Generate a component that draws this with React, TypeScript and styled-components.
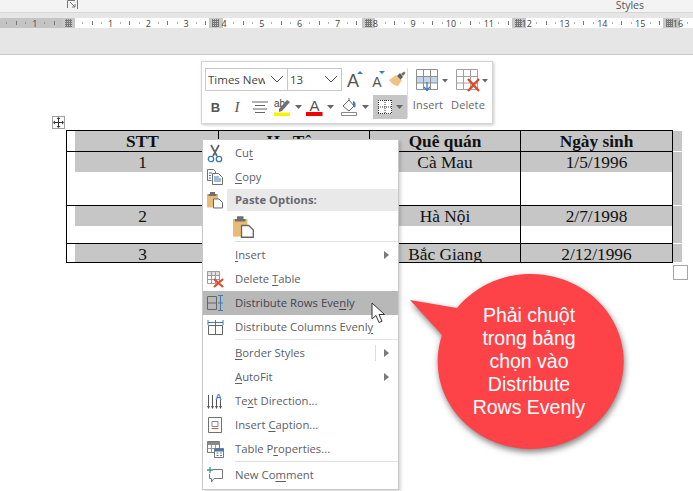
import React from 'react'
import styled, { createGlobalStyle } from 'styled-components'

const GlobalStyle = createGlobalStyle`
    html, body {
        margin: 0;
        padding: 0;
        background: #ffffff;
    }
`

const UI_FONT = `"Open Sans", "Noto Sans", sans-serif`

const Page = styled.div`
    position: relative;
    width: 693px;
    height: 491px;
    overflow: hidden;
    background: #ffffff;
    font-family: ${UI_FONT};
`

const RibbonEdge = styled.div`
    height: 12px;
    display: flex;
    align-items: flex-start;
    padding: 0 49px 0 67px;
    background: #f3f3f3;
    border-bottom: 1px solid #d6d6d6;
`

const Launcher = styled.svg`
    width: 12px;
    height: 9px;
    flex: none;
`

const StylesLabel = styled.span`
    margin-left: auto;
    font-size: 10.5px;
    line-height: 11px;
    color: #555555;
`

const RulerBand = styled.div`
    height: 42px;
    box-sizing: border-box;
    padding-top: 5px;
    background: #e6e6e6;
    border-bottom: 1px solid #c9c9c9;
`

const RulerSvg = styled.svg`
    display: block;
    width: 693px;
    height: 10px;
    font-family: ${UI_FONT};
`

const TableWrap = styled.div`
    position: relative;
    width: 616px;
    margin: 75px 0 0 66px;
`

const Grid = styled.div`
    display: grid;
    grid-template-columns: 153px 151px 151px 152px 9px;
    grid-template-rows: 22px 54px 38px 19px;
    font-family: "Liberation Serif", "Times New Roman", serif;
    font-size: 17.33px;
    color: #111111;
`

const Cell = styled.div<{ $first?: boolean; $top?: boolean; $bar: string }>`
    box-sizing: border-box;
    overflow: hidden;
    text-align: center;
    line-height: 21px;
    border-right: 1px solid #000000;
    border-bottom: 1px solid #000000;
    border-left: ${(p) => (p.$first ? '1px solid #000000' : 'none')};
    border-top: ${(p) => (p.$top ? '1px solid #000000' : 'none')};
    background: linear-gradient(#c6c6c6, #c6c6c6) no-repeat right top;
    background-size: ${(p) => (p.$first ? 'calc(100% - 8px)' : '100%')} ${(p) => p.$bar};
`

const HeadCell = styled(Cell)`
    font-weight: bold;
`

const Gutter = styled.div<{ $top?: boolean }>`
    margin-bottom: 1px;
    margin-top: ${(p) => (p.$top ? '1px' : '0')};
    background: #c6c6c6;
`

const MoveHandle = styled.div`
    position: absolute;
    left: -14px;
    top: -14px;
    width: 13px;
    height: 13px;
    box-sizing: border-box;
    border: 1px solid #a0a0a0;
    display: flex;
    align-items: center;
    justify-content: center;
    background: #ffffff;
`

const ResizeHandle = styled.div`
    position: absolute;
    left: 607px;
    top: 135px;
    width: 15px;
    height: 15px;
    box-sizing: border-box;
    border: 1px solid #a6a6a6;
    background: #ffffff;
`

const MiniToolbar = styled.div`
    position: absolute;
    left: 201px;
    top: 61px;
    width: 292px;
    height: 63px;
    box-sizing: border-box;
    display: flex;
    padding: 5px 4px 4px 3px;
    background: #ffffff;
    border: 1px solid #d4d4d4;
    box-shadow: 1px 1px 3px rgba(0, 0, 0, 0.22);
    color: #555555;
`

const ToolColumn = styled.div`
    width: 202px;
    display: flex;
    flex-direction: column;
    gap: 4px;
`

const ToolRow = styled.div`
    display: flex;
    align-items: center;
`

const Combo = styled.div<{ $w: number }>`
    width: ${(p) => p.$w}px;
    height: 23px;
    box-sizing: border-box;
    margin-right: -1px;
    border: 1px solid #c8c8c8;
    display: flex;
    align-items: center;
    padding: 0 3px 0 2px;
    font-size: 11.5px;
    color: #444444;
    white-space: nowrap;
    overflow: hidden;
`

const ComboText = styled.span`
    flex: 1;
    overflow: hidden;
    margin-right: 5px;
`

const ToolBtn = styled.div<{ $w: number; $active?: boolean }>`
    width: ${(p) => p.$w}px;
    height: 24px;
    flex: none;
    display: flex;
    align-items: center;
    justify-content: center;
    gap: 4px;
    background: ${(p) => (p.$active ? '#c6c6c6' : 'transparent')};
`

const BoldGlyph = styled.span`
    font-family: "Liberation Sans", Arial, sans-serif;
    font-size: 13px;
    font-weight: bold;
    color: #555555;
`

const ItalicGlyph = styled.span`
    font-family: "Liberation Serif", serif;
    font-size: 15px;
    font-style: italic;
    color: #555555;
`

const ToolDivider = styled.div`
    width: 1px;
    height: 50px;
    margin-top: 1px;
    background: #dedede;
`

const BigBtn = styled.div`
    width: 40px;
    display: flex;
    flex-direction: column;
    align-items: flex-end;
    padding-top: 2px;
`

const BigLabel = styled.span`
    align-self: center;
    margin-top: 5px;
    font-size: 11px;
    line-height: 16px;
    letter-spacing: 0.1px;
    color: #666666;
`

const Menu = styled.div`
    position: absolute;
    left: 202px;
    top: 139px;
    width: 197px;
    height: 351px;
    box-sizing: border-box;
    padding: 1px 0;
    background: #ffffff;
    border: 1px solid #c9c9c9;
    box-shadow: 2px 2px 3px rgba(0, 0, 0, 0.16);
    font-size: 11.3px;
    color: #5e5e68;
`

const Item = styled.div<{ $hot?: boolean }>`
    height: 24px;
    display: flex;
    align-items: center;
    background: ${(p) => (p.$hot ? '#b8b8b8' : 'transparent')};
    color: ${(p) => (p.$hot ? '#44444e' : 'inherit')};
`

const IconSlot = styled.div`
    width: 32px;
    flex: none;
    display: flex;
    justify-content: center;
    padding-right: 8px;
    box-sizing: border-box;
`

const ItemText = styled.span`
    flex: 1;
    padding-bottom: 2px;
    white-space: nowrap;
`

const Key = styled.span`
    text-decoration: underline;
    text-underline-offset: 2px;
`

const SubArrow = styled.i`
    width: 0;
    height: 0;
    margin-right: 9px;
    border-left: 5px solid #7a7a7a;
    border-top: 4px solid transparent;
    border-bottom: 4px solid transparent;
`

const SplitLine = styled.i`
    width: 1px;
    height: 16px;
    margin-right: 8px;
    background: #dcdcdc;
`

const PasteLine = styled.div`
    height: 22px;
    display: flex;
    align-items: center;
`

const PasteHead = styled.div`
    flex: 1;
    align-self: stretch;
    display: flex;
    align-items: center;
    margin-left: -8px;
    padding: 0 0 2px 8px;
    background: #e9e9e9;
    font-weight: 700;
    color: #6a6a72;
`

const PasteRow = styled.div`
    height: 30px;
    padding: 4px 0 0 30px;
    box-sizing: border-box;
`

const Separator = styled.div`
    height: 1px;
    margin: 0 0 1px 32px;
    background: #e2e2e2;
`

const Callout = styled.div`
    position: absolute;
    left: 405px;
    top: 270px;
    width: 240px;
    height: 190px;
`

const CalloutShape = styled.svg`
    display: block;
    width: 240px;
    height: 190px;
    overflow: visible;
    filter: drop-shadow(1px 3px 3px rgba(0, 0, 0, 0.5));
`

const CalloutText = styled.div`
    position: absolute;
    left: 44px;
    top: 34px;
    width: 160px;
    text-align: center;
    font-family: "Liberation Sans", Arial, sans-serif;
    font-size: 19.5px;
    line-height: 23px;
    color: #ffffff;
`

const Pointer = styled.svg`
    position: absolute;
    left: 371px;
    top: 302px;
    width: 16px;
    height: 22px;
`

const Caret = () => (
    <svg width="7" height="4" viewBox="0 0 7 4">
        <path d="M0 0h7L3.5 4z" fill="#666666" />
    </svg>
)

const Chevron = () => (
    <svg width="14" height="8" viewBox="0 0 14 8">
        <path d="M1 1l6 6 6-6" fill="none" stroke="#555555" />
    </svg>
)

const Ruler = () => {
    const step = 37.83
    const zero = 72.7
    const numbers: [number, number][] = []
    for (let n = 1; n <= 16; n++) numbers.push([n, zero + n * step])
    numbers.push([1, zero - step])
    const ticks: number[] = []
    for (let q = -8; q < 70; q++) {
        if (q % 4 !== 0) ticks.push(q)
    }
    const markers = [
        [62, 13],
        [209, 14],
        [362, 13],
        [512, 14],
        [663, 17],
    ]
    return (
        <RulerSvg viewBox="0 0 693 10">
            <defs>
                <pattern id="hatch" width="2" height="2" patternUnits="userSpaceOnUse">
                    <rect width="1" height="2" fill="#777777" />
                    <rect width="2" height="1" fill="#777777" />
                </pattern>
            </defs>
            <rect width="693" height="10" fill="#ffffff" />
            <rect width="75" height="10" fill="#c4c4c4" />
            {ticks.map((q) => {
                const x = Math.round(zero + (q * step) / 4)
                return q % 2 === 0 ? (
                    <rect key={q} x={x} y="3" width="1" height="4" fill="#777777" />
                ) : (
                    <rect key={q} x={x} y="4.5" width="1" height="1" fill="#666666" />
                )
            })}
            {markers.map(([x, w]) => (
                <g key={x}>
                    <rect x={x} width={w} height="10" fill="#c8c8c8" />
                    <rect x={x + 3} y="1" width="7" height="8" fill="url(#hatch)" />
                </g>
            ))}
            {numbers.map(([n, x]) => (
                <text key={`${n}-${x}`} x={x} y="8.5" fontSize="9" textAnchor="middle" fill="#444444">
                    {n}
                </text>
            ))}
        </RulerSvg>
    )
}

const CutIcon = () => (
    <svg width="16" height="19" viewBox="0 0 16 19">
        <path d="M4 1l6 11M12 1L6 12" stroke="#5f6468" strokeWidth="1.7" fill="none" />
        <circle cx="4" cy="15" r="2.7" fill="none" stroke="#3e7ab8" strokeWidth="1.3" />
        <circle cx="12" cy="15" r="2.7" fill="none" stroke="#3e7ab8" strokeWidth="1.3" />
    </svg>
)

const CopyIcon = () => (
    <svg width="16" height="16" viewBox="0 0 16 16">
        <path d="M.5.5h6l2 2V4M.5.5v11h4" fill="#ffffff" stroke="#707070" />
        <path d="M2 4h3M2 6.5h2M2 9h2" stroke="#3e7ab8" />
        <path d="M5.5 4.5h6l4 4v7h-10z" fill="#ffffff" stroke="#707070" />
        <path d="M7 8h5M7 10h7M7 12h7" stroke="#3e7ab8" />
    </svg>
)

const PasteIcon = ({ size = 16 }: { size?: number }) => (
    <svg width={size} height={size * 1.08} viewBox="0 0 16 17.3">
        <path d="M0 3h11v13.500H0z" fill="#e9bb78" />
        <path d="M3 3V1h5v2h1.500v2h-8V3z" fill="#6f6f6f" />
        <path d="M6.500 8h5.500l3.500 3.500v5.500h-9z" fill="#ffffff" stroke="#666666" />
    </svg>
)

const DeleteTableIcon = () => (
    <svg width="17" height="17" viewBox="0 0 17 17">
        <path d="M.5.5h12v4H.5z" fill="#c9c9c9" opacity="0.6" />
        <path d="M.5.5h12v12H.5zM.5 4.500h12M.5 8.500h12M4.500.5v12M8.500.5v12" fill="none" stroke="#9b9b9b" />
        <path d="M7 8l9 8M16 8l-9 8" stroke="#e24b2c" strokeWidth="2.200" />
    </svg>
)

const RowsEvenIcon = () => (
    <svg width="17" height="16" viewBox="0 0 17 16">
        <path d="M.5 1.500h9v13h-9zM.5 8h9" fill="none" stroke="#666666" />
        <path d="M13.500 1v14M11 .5h5M11 8h5M11 15.500h5" fill="none" stroke="#3e7ab8" />
    </svg>
)

const ColumnsEvenIcon = () => (
    <svg width="17" height="16" viewBox="0 0 17 16">
        <path d="M1.500 6.500h14v9h-14zM8.500 6.500v9" fill="none" stroke="#666666" />
        <path d="M1 3.500h15M1 1v5M8.500 1v5M16 1v5" fill="none" stroke="#3e7ab8" />
    </svg>
)

const TextDirectionIcon = () => (
    <svg width="16" height="17" viewBox="0 0 16 17">
        <path d="M1.500 2v12M5.500 2v12M9.500 7v7M13.500 7v7" stroke="#555555" />
        <path d="M0 13l1.500 3L3 13zM4 13l1.500 3L7 13zM8 13l1.500 3 1.500-3zM12 13l1.500 3 1.500-3z" fill="#555555" />
        <text x="11.500" y="7" fontSize="9" fontWeight="700" textAnchor="middle" fill="#3e7ab8" fontFamily="Liberation Sans">
            A
        </text>
    </svg>
)

const CaptionIcon = () => (
    <svg width="15" height="16" viewBox="0 0 15 16">
        <path d="M.5.5h13v15H.5z" fill="none" stroke="#707070" />
        <path d="M4 4.500h6v5H4z" fill="none" stroke="#888888" />
        <path d="M3.500 11.500h7" stroke="#d9573a" />
    </svg>
)

const TablePropsIcon = () => (
    <svg width="17" height="17" viewBox="0 0 17 17">
        <path d="M.5.500h12v11H.5z" fill="#ffffff" stroke="#777777" />
        <path d="M.5 1h12v3H.5z" fill="#8a8a8a" />
        <path d="M.5 7.500h12M4.500 4v7.500M8.500 4v7.500" stroke="#999999" />
        <path d="M7.500 7.500h9v9h-9z" fill="#ffffff" stroke="#777777" />
        <path d="M7.500 8h9v2.500h-9z" fill="#3e7ab8" />
        <path d="M9.500 12h2M13 12h2M9.500 14.500h2M13 14.500h2" stroke="#777777" />
    </svg>
)

const CommentIcon = () => (
    <svg width="16" height="17" viewBox="0 0 16 17">
        <path d="M6 2.500h9.500v9H7L4.500 15v-3.500H2.500V7" fill="none" stroke="#777777" />
        <path d="M3 0v6M0 3h6" stroke="#3a9a8a" strokeWidth="1.300" />
    </svg>
)

const GrowIcon = ({ shrink }: { shrink?: boolean }) => (
    <svg width="17" height="20" viewBox="0 0 17 20">
        <text
            x="7"
            y="18"
            fontSize={shrink ? 14 : 18}
            textAnchor="middle"
            fill="#555555"
            fontFamily="Liberation Sans"
        >
            A
        </text>
        {shrink ? (
            <path d="M9 2h6l-3 3z" fill="#3e7ab8" />
        ) : (
            <path d="M11 5h6l-3-3z" fill="#3e7ab8" />
        )}
    </svg>
)

const PainterIcon = () => (
    <svg width="17" height="17" viewBox="0 0 17 17">
        <path d="M7 4l6 5-4 6C6 15 2 12 0 9z" fill="#efc386" />
        <path d="M8 5l3-3 3 4-2.500 2.500z" fill="#5f5f5f" />
        <path d="M12 3l3-2.500L16.500 2 14 5z" fill="#6f6f6f" />
    </svg>
)

const AlignIcon = () => (
    <svg width="16" height="13" viewBox="0 0 16 13">
        <path d="M0 1h16M3 4.500h10M1 8h14M3 11.500h10" stroke="#666666" />
    </svg>
)

const HighlightIcon = () => (
    <svg width="17" height="18" viewBox="0 0 17 18">
        <text x="0" y="9" fontSize="10" fill="#444444" fontFamily="Liberation Sans">
            ab
        </text>
        <path d="M5 11l8-9 3 2-8 9-3 1z" fill="#6f6f6f" />
        <path d="M0 14.500h16V18H0z" fill="#f7f300" />
    </svg>
)

const FontColorIcon = () => (
    <svg width="17" height="18" viewBox="0 0 17 18">
        <text x="8.500" y="13" fontSize="15" textAnchor="middle" fill="#555555" fontFamily="Liberation Sans">
            A
        </text>
        <path d="M0 14h16.500v4H0z" fill="#f00000" />
    </svg>
)

const ShadingIcon = () => (
    <svg width="17" height="18" viewBox="0 0 17 18">
        <path d="M2 8l6-6 5 6-5 5z" fill="#ffffff" stroke="#666666" />
        <path d="M8 2V0" stroke="#666666" />
        <path d="M12 3c3 1 3 4 2 7l-2-3z" fill="#3e7ab8" />
        <path d="M.5 14.500h15v3H.5z" fill="#ffffff" stroke="#8a8a8a" />
    </svg>
)

const BordersIcon = () => (
    <svg width="14" height="14" viewBox="0 0 14 14">
        <path d="M0 0h14v14H0z" fill="#ffffff" />
        <path
            d="M.5 0v14M13.500 0v14M0 .5h14M0 13.500h14M7 0v14M0 7h14"
            fill="none"
            stroke="#333333"
            strokeDasharray="1 1"
        />
    </svg>
)

const InsertIcon = () => (
    <svg width="32" height="23" viewBox="0 0 32 23">
        <path d="M.5 8h21v6H.5z" fill="#c5d5e6" />
        <path
            d="M.5.500h21v20H.5zM.5 7.500h21M.5 14h21M7.500.5v20M14.500.5v20"
            fill="none"
            stroke="#8f8f8f"
        />
        <path d="M11 13v8M8 18l3 3.500 3-3.500" fill="none" stroke="#3e7ab8" strokeWidth="1.300" />
        <path d="M26 10h6l-3 3.500z" fill="#666666" />
    </svg>
)

const DeleteIcon = () => (
    <svg width="32" height="23" viewBox="0 0 32 23">
        <path
            d="M.5.500h21v20H.5zM.5 7.500h21M.5 14h21M7.500.5v20M14.500.5v20"
            fill="none"
            stroke="#a0a0a0"
        />
        <path d="M12 10l11 12M23 10L12 22" stroke="#e0482b" strokeWidth="2.400" />
        <path d="M26 10h6l-3 3.500z" fill="#666666" />
    </svg>
)

const rows = [
    { bar: '100%', cells: ['STT', 'Họ Tên', 'Quê quán', 'Ngày sinh'] },
    { bar: '20px', cells: ['1', '', 'Cà Mau', '1/5/1996'] },
    { bar: '20px', cells: ['2', '', 'Hà Nội', '2/7/1998'] },
    { bar: '20px', cells: ['3', '', 'Bắc Giang', '2/12/1996'] },
]

export default function App() {
    return (
        <Page>
            <GlobalStyle />
            <RibbonEdge>
                <Launcher viewBox="0 0 12 9">
                    <path d="M.5 8V.5H8M3 2l5 5M8 4v3H5M10.500 0v9" fill="none" stroke="#777777" />
                </Launcher>
                <StylesLabel>Styles</StylesLabel>
            </RibbonEdge>
            <RulerBand>
                <Ruler />
            </RulerBand>
            <TableWrap>
                <Grid>
                    {rows.map((row, r) => (
                        <React.Fragment key={r}>
                            {row.cells.map((text, c) =>
                                r === 0 ? (
                                    <HeadCell key={c} $top $first={c === 0} $bar={row.bar}>
                                        {text}
                                    </HeadCell>
                                ) : (
                                    <Cell key={c} $first={c === 0} $bar={row.bar}>
                                        {text}
                                    </Cell>
                                )
                            )}
                            <Gutter $top={r === 0} />
                        </React.Fragment>
                    ))}
                </Grid>
                <MoveHandle>
                    <svg width="11" height="11" viewBox="0 0 11 11">
                        <path d="M5.500 1.500v8M1.500 5.500h8" fill="none" stroke="#333333" />
                        <path d="M5.500 0l2 2h-4zM5.500 11l2-2h-4zM0 5.500l2-2v4zM11 5.500l-2-2v4z" fill="#333333" />
                    </svg>
                </MoveHandle>
                <ResizeHandle />
            </TableWrap>

            <MiniToolbar>
                <ToolColumn>
                    <ToolRow>
                        <Combo $w={83}>
                            <ComboText>Times New</ComboText>
                            <Chevron />
                        </Combo>
                        <Combo $w={55}>
                            <ComboText>13</ComboText>
                            <Chevron />
                        </Combo>
                        <ToolBtn $w={27}>
                            <GrowIcon />
                        </ToolBtn>
                        <ToolBtn $w={21}>
                            <GrowIcon shrink />
                        </ToolBtn>
                        <ToolBtn $w={17}>
                            <PainterIcon />
                        </ToolBtn>
                    </ToolRow>
                    <ToolRow>
                        <ToolBtn $w={21}>
                            <BoldGlyph>B</BoldGlyph>
                        </ToolBtn>
                        <ToolBtn $w={22}>
                            <ItalicGlyph>I</ItalicGlyph>
                        </ToolBtn>
                        <ToolBtn $w={24}>
                            <AlignIcon />
                        </ToolBtn>
                        <ToolBtn $w={31}>
                            <HighlightIcon />
                            <Caret />
                        </ToolBtn>
                        <ToolBtn $w={34}>
                            <FontColorIcon />
                            <Caret />
                        </ToolBtn>
                        <ToolBtn $w={36}>
                            <ShadingIcon />
                            <Caret />
                        </ToolBtn>
                        <ToolBtn $w={34} $active>
                            <BordersIcon />
                            <Caret />
                        </ToolBtn>
                    </ToolRow>
                </ToolColumn>
                <ToolDivider />
                <BigBtn>
                    <InsertIcon />
                    <BigLabel>Insert</BigLabel>
                </BigBtn>
                <BigBtn>
                    <DeleteIcon />
                    <BigLabel>Delete</BigLabel>
                </BigBtn>
            </MiniToolbar>

            <Menu>
                <Item>
                    <IconSlot><CutIcon /></IconSlot>
                    <ItemText>Cu<Key>t</Key></ItemText>
                </Item>
                <Item>
                    <IconSlot><CopyIcon /></IconSlot>
                    <ItemText><Key>C</Key>opy</ItemText>
                </Item>
                <PasteLine>
                    <IconSlot><PasteIcon /></IconSlot>
                    <PasteHead>Paste Options:</PasteHead>
                </PasteLine>
                <PasteRow>
                    <PasteIcon size={21} />
                </PasteRow>
                <Separator />
                <Item>
                    <IconSlot />
                    <ItemText><Key>I</Key>nsert</ItemText>
                    <SubArrow />
                </Item>
                <Item>
                    <IconSlot><DeleteTableIcon /></IconSlot>
                    <ItemText>Delete <Key>T</Key>able</ItemText>
                </Item>
                <Item $hot>
                    <IconSlot><RowsEvenIcon /></IconSlot>
                    <ItemText>Distribute Rows Eve<Key>n</Key>ly</ItemText>
                </Item>
                <Item>
                    <IconSlot><ColumnsEvenIcon /></IconSlot>
                    <ItemText>Distribute Columns Evenl<Key>y</Key></ItemText>
                </Item>
                <Separator />
                <Item>
                    <IconSlot />
                    <ItemText><Key>B</Key>order Styles</ItemText>
                    <SplitLine />
                    <SubArrow />
                </Item>
                <Item>
                    <IconSlot />
                    <ItemText><Key>A</Key>utoFit</ItemText>
                    <SubArrow />
                </Item>
                <Item>
                    <IconSlot><TextDirectionIcon /></IconSlot>
                    <ItemText>Te<Key>x</Key>t Direction...</ItemText>
                </Item>
                <Item>
                    <IconSlot><CaptionIcon /></IconSlot>
                    <ItemText>Insert <Key>C</Key>aption...</ItemText>
                </Item>
                <Item>
                    <IconSlot><TablePropsIcon /></IconSlot>
                    <ItemText>Table P<Key>r</Key>operties...</ItemText>
                </Item>
                <Separator />
                <Item>
                    <IconSlot><CommentIcon /></IconSlot>
                    <ItemText>New Co<Key>m</Key>ment</ItemText>
                </Item>
            </Menu>

            <Pointer viewBox="0 0 16 22">
                <path
                    d="M1 1v16l4-3.500 3 7 3-1.300-3-6.700h5.500z"
                    fill="#ffffff"
                    stroke="#333333"
                    strokeLinejoin="round"
                />
            </Pointer>

            <Callout>
                <CalloutShape viewBox="0 0 240 190">
                    <path d="M5 30L52 38A93 87.500 0 1 1 37 65Z" fill="#fd4347" />
                </CalloutShape>
                <CalloutText>
                    Phải chuột
                    <br />
                    trong bảng
                    <br />
                    chọn vào
                    <br />
                    Distribute
                    <br />
                    Rows Evenly
                </CalloutText>
            </Callout>
        </Page>
    )
}
